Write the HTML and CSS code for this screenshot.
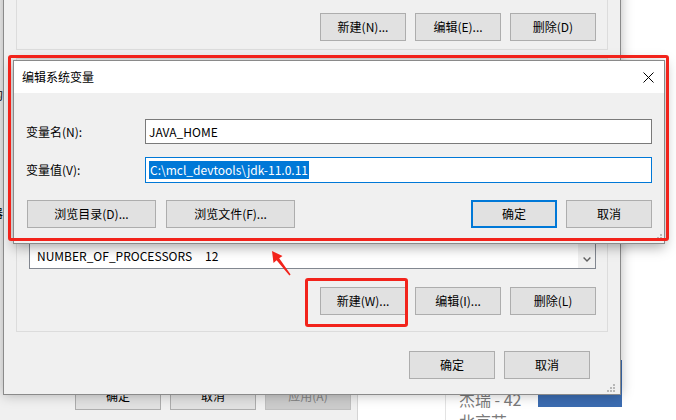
FILE: index.html
```html
<!DOCTYPE html>
<html lang="zh-CN">
<head>
<meta charset="utf-8">
<title>编辑系统变量</title>
<link rel="stylesheet" href="styles.css">
</head>
<body>
<div class="desk">
  <div class="sysprops">
    <div class="sp-frags">
      <span class="frag frag1">的</span>
      <span class="frag frag2">器</span>
    </div>
    <div class="sp-buttons">
      <div class="btn sp-btn">确定</div>
      <div class="btn sp-btn">取消</div>
      <div class="btn sp-btn disabled">应用(A)</div>
    </div>
  </div>

  <div class="app-right">
    <div class="app-col"></div>
    <div class="app-main">
      <div class="app-name">杰瑞 - 42</div>
      <div class="app-sub">北京艺</div>
    </div>
    <div class="app-bar"></div>
  </div>

  <div class="env-dialog">
    <div class="group g-user">
      <div class="btn-row">
        <div class="btn">新建(N)...</div>
        <div class="btn">编辑(E)...</div>
        <div class="btn">删除(D)</div>
      </div>
    </div>
    <div class="group g-sys">
      <div class="listbox">
        <div class="list-rows">
          <div class="list-row"><span class="col-name">NUMBER_OF_PROCESSORS</span><span class="col-val">12</span></div>
        </div>
        <div class="scrollbar">
          <div class="sb-down">
            <svg width="8" height="5" viewBox="0 0 8 5"><path d="M0.6 0.6 L4 4 L7.4 0.6" fill="none" stroke="#606060" stroke-width="1.4"/></svg>
          </div>
        </div>
      </div>
      <div class="btn-row">
        <div class="btn">新建(W)...</div>
        <div class="btn">编辑(I)...</div>
        <div class="btn">删除(L)</div>
      </div>
    </div>
    <div class="btn-row foot">
      <div class="btn">确定</div>
      <div class="btn">取消</div>
    </div>
    <svg class="grip" width="9" height="9" viewBox="0 0 9 9"><g fill="#b8b8b8"><rect x="6" y="0" width="2" height="2"/><rect x="3" y="3" width="2" height="2"/><rect x="6" y="3" width="2" height="2"/><rect x="0" y="6" width="2" height="2"/><rect x="3" y="6" width="2" height="2"/><rect x="6" y="6" width="2" height="2"/></g></svg>
  </div>

  <div class="edit-dialog">
    <div class="title-bar">
      <span class="title">编辑系统变量</span>
      <svg class="close" width="11" height="11" viewBox="0 0 11 11"><path d="M0.5 0.5 L10.5 10.5 M10.5 0.5 L0.5 10.5" stroke="#000" stroke-width="1"/></svg>
    </div>
    <div class="edit-body">
      <div class="field">
        <label class="label">变量名(N):</label>
        <div class="input">JAVA_HOME</div>
      </div>
      <div class="field f2">
        <label class="label">变量值(V):</label>
        <div class="input focus"><span class="sel">C:\mcl_devtools\jdk-11.0.11</span></div>
      </div>
      <div class="edit-buttons">
        <div class="left-btns">
          <div class="btn wide">浏览目录(D)...</div>
          <div class="btn wide">浏览文件(F)...</div>
        </div>
        <div class="right-btns">
          <div class="btn primary">确定</div>
          <div class="btn">取消</div>
        </div>
      </div>
    </div>
    <svg class="grip grip2" width="9" height="9" viewBox="0 0 9 9"><g fill="#b8b8b8"><rect x="6" y="0" width="2" height="2"/><rect x="3" y="3" width="2" height="2"/><rect x="6" y="3" width="2" height="2"/></g></svg>
  </div>

  <div class="mark mark-dialog"></div>
  <div class="mark mark-new"></div>
  <svg class="arrow" width="36" height="36" viewBox="0 0 36 36"><polygon points="10,7 20.5,12 17.2,14.2 28.6,30.6 27.4,31.4 14.6,16.2 11.5,19" fill="#f2231b"/></svg>
</div>
</body>
</html>
```

FILE: styles.css
```css
* { box-sizing: border-box; margin: 0; padding: 0; }
html, body { width: 676px; height: 420px; overflow: hidden; }
body {
  font-family: "Noto Sans CJK SC", "Noto Sans", sans-serif;
  font-size: 12px;
  line-height: 16px;
  color: #000;
  background: #fff;
}
.desk { position: relative; width: 676px; height: 420px; overflow: hidden; }

/* background window (system properties) */
.sysprops {
  position: absolute; left: 0; top: 0; width: 358px; height: 420px;
  background: #f0f0f0; border-right: 1px solid #d5d5d5;
  display: flex; flex-direction: column; justify-content: space-between;
  padding-bottom: 10px;
}
.sp-frags { display: flex; flex-direction: column; padding-top: 87px; }
.frag { margin-left: -9px; font-size: 12px; color: #000; }
.frag2 { margin-top: 102px; }
.sp-buttons { display: flex; gap: 9px; padding-left: 75px; }
.sp-btn { width: 86px; }
.btn.disabled { background: #cccccc; border-color: #bfbfbf; color: #838383; }

/* right side app */
.app-right {
  position: absolute; left: 358px; top: 0; right: 0; bottom: 0;
  background: #fff; display: flex;
}
.app-col { width: 88px; border-right: 1px solid #e3e3e3; }
.app-main { width: 92px; padding: 389px 0 0 13px; color: #7a7a7a; font-size: 16px; line-height: 20px; white-space: nowrap; }
.app-sub { margin-top: 2px; }
.app-bar { width: 84px; height: 47px; margin-top: 360px; background: #3b6cb1; }

/* environment variables dialog */
.env-dialog {
  position: absolute; left: 3px; top: -100px; width: 618px; height: 495px;
  background: #f0f0f0; border: 1px solid #8a8a8a;
  box-shadow: 0 0 12px rgba(0,0,0,0.28);
  display: flex; flex-direction: column; padding: 0 12px;
}
.group { border: 1px solid #dcdcdc; display: flex; flex-direction: column; justify-content: flex-end; }
.g-user { margin-top: 19px; height: 130px; padding: 0 11px 8px 12px; }
.g-sys { margin-top: 8px; height: 274px; padding: 0 11px 16px 12px; }
.btn-row { display: flex; justify-content: flex-end; gap: 9px; }
.btn-row .btn { width: 86px; }
.g-sys .btn-row { margin-top: 18px; }
.foot { margin-top: 19px; padding-right: 18px; }

.btn {
  height: 28px; background: #e1e1e1; border: 1px solid #adadad;
  display: flex; align-items: center; justify-content: center;
  white-space: nowrap; font-size: 12px;
}

.listbox {
  height: 199px; background: #fff; border: 1px solid #828790;
  display: flex;
}
.list-rows { flex: 1; display: flex; flex-direction: column; justify-content: flex-end; padding-bottom: 3px; }
.list-row { height: 18px; display: flex; align-items: center; padding-left: 7px; white-space: nowrap; }
.col-name { width: 168px; }
.scrollbar { width: 17px; background: #f0f0f0; display: flex; flex-direction: column; justify-content: flex-end; }
.sb-down { height: 17px; display: flex; align-items: center; justify-content: center; }

.grip { position: absolute; right: 4px; bottom: 1px; }

/* edit dialog */
.edit-dialog {
  position: absolute; left: 13px; top: 60px; width: 652px; height: 184px;
  background: #f0f0f0; border: 1px solid #8a8a8a;
  box-shadow: 0 3px 12px rgba(0,0,0,0.35);
}
.title-bar {
  height: 32px; background: #fff; display: flex; align-items: center;
  justify-content: space-between; padding: 0 10px 0 8px;
}
.title { font-size: 12px; }
.edit-body { padding: 26px 12px 0 12px; }
.field { display: grid; grid-template-columns: 119px 1fr; align-items: center; }
.f2 { margin-top: 13px; }
.label { font-size: 12px; }
.input {
  height: 25px; background: #fff; border: 1px solid #7a7a7a;
  display: flex; align-items: center; padding-left: 3px; white-space: nowrap;
}
.input.focus { height: 26px; border-color: #0078d7; }
.sel { background: #0078d7; color: #fff; line-height: 18px; padding: 0 1px; }
.edit-buttons { margin-top: 17px; display: flex; justify-content: space-between; padding-left: 1px; }
.left-btns { display: flex; gap: 10px; }
.right-btns { display: flex; gap: 9px; }
.btn.wide { width: 129px; }
.right-btns .btn { width: 86px; }
.btn.primary { border: 2px solid #0078d7; }
.grip2 { right: 1px; bottom: 0px; }

/* annotations */
.mark { position: absolute; border: 3px solid #f2231b; border-radius: 3px; }
.mark-dialog { left: 8px; top: 55px; width: 661px; height: 186px; }
.mark-new { left: 305px; top: 278px; width: 103px; height: 49px; }
.arrow { position: absolute; left: 262px; top: 244px; }
```
